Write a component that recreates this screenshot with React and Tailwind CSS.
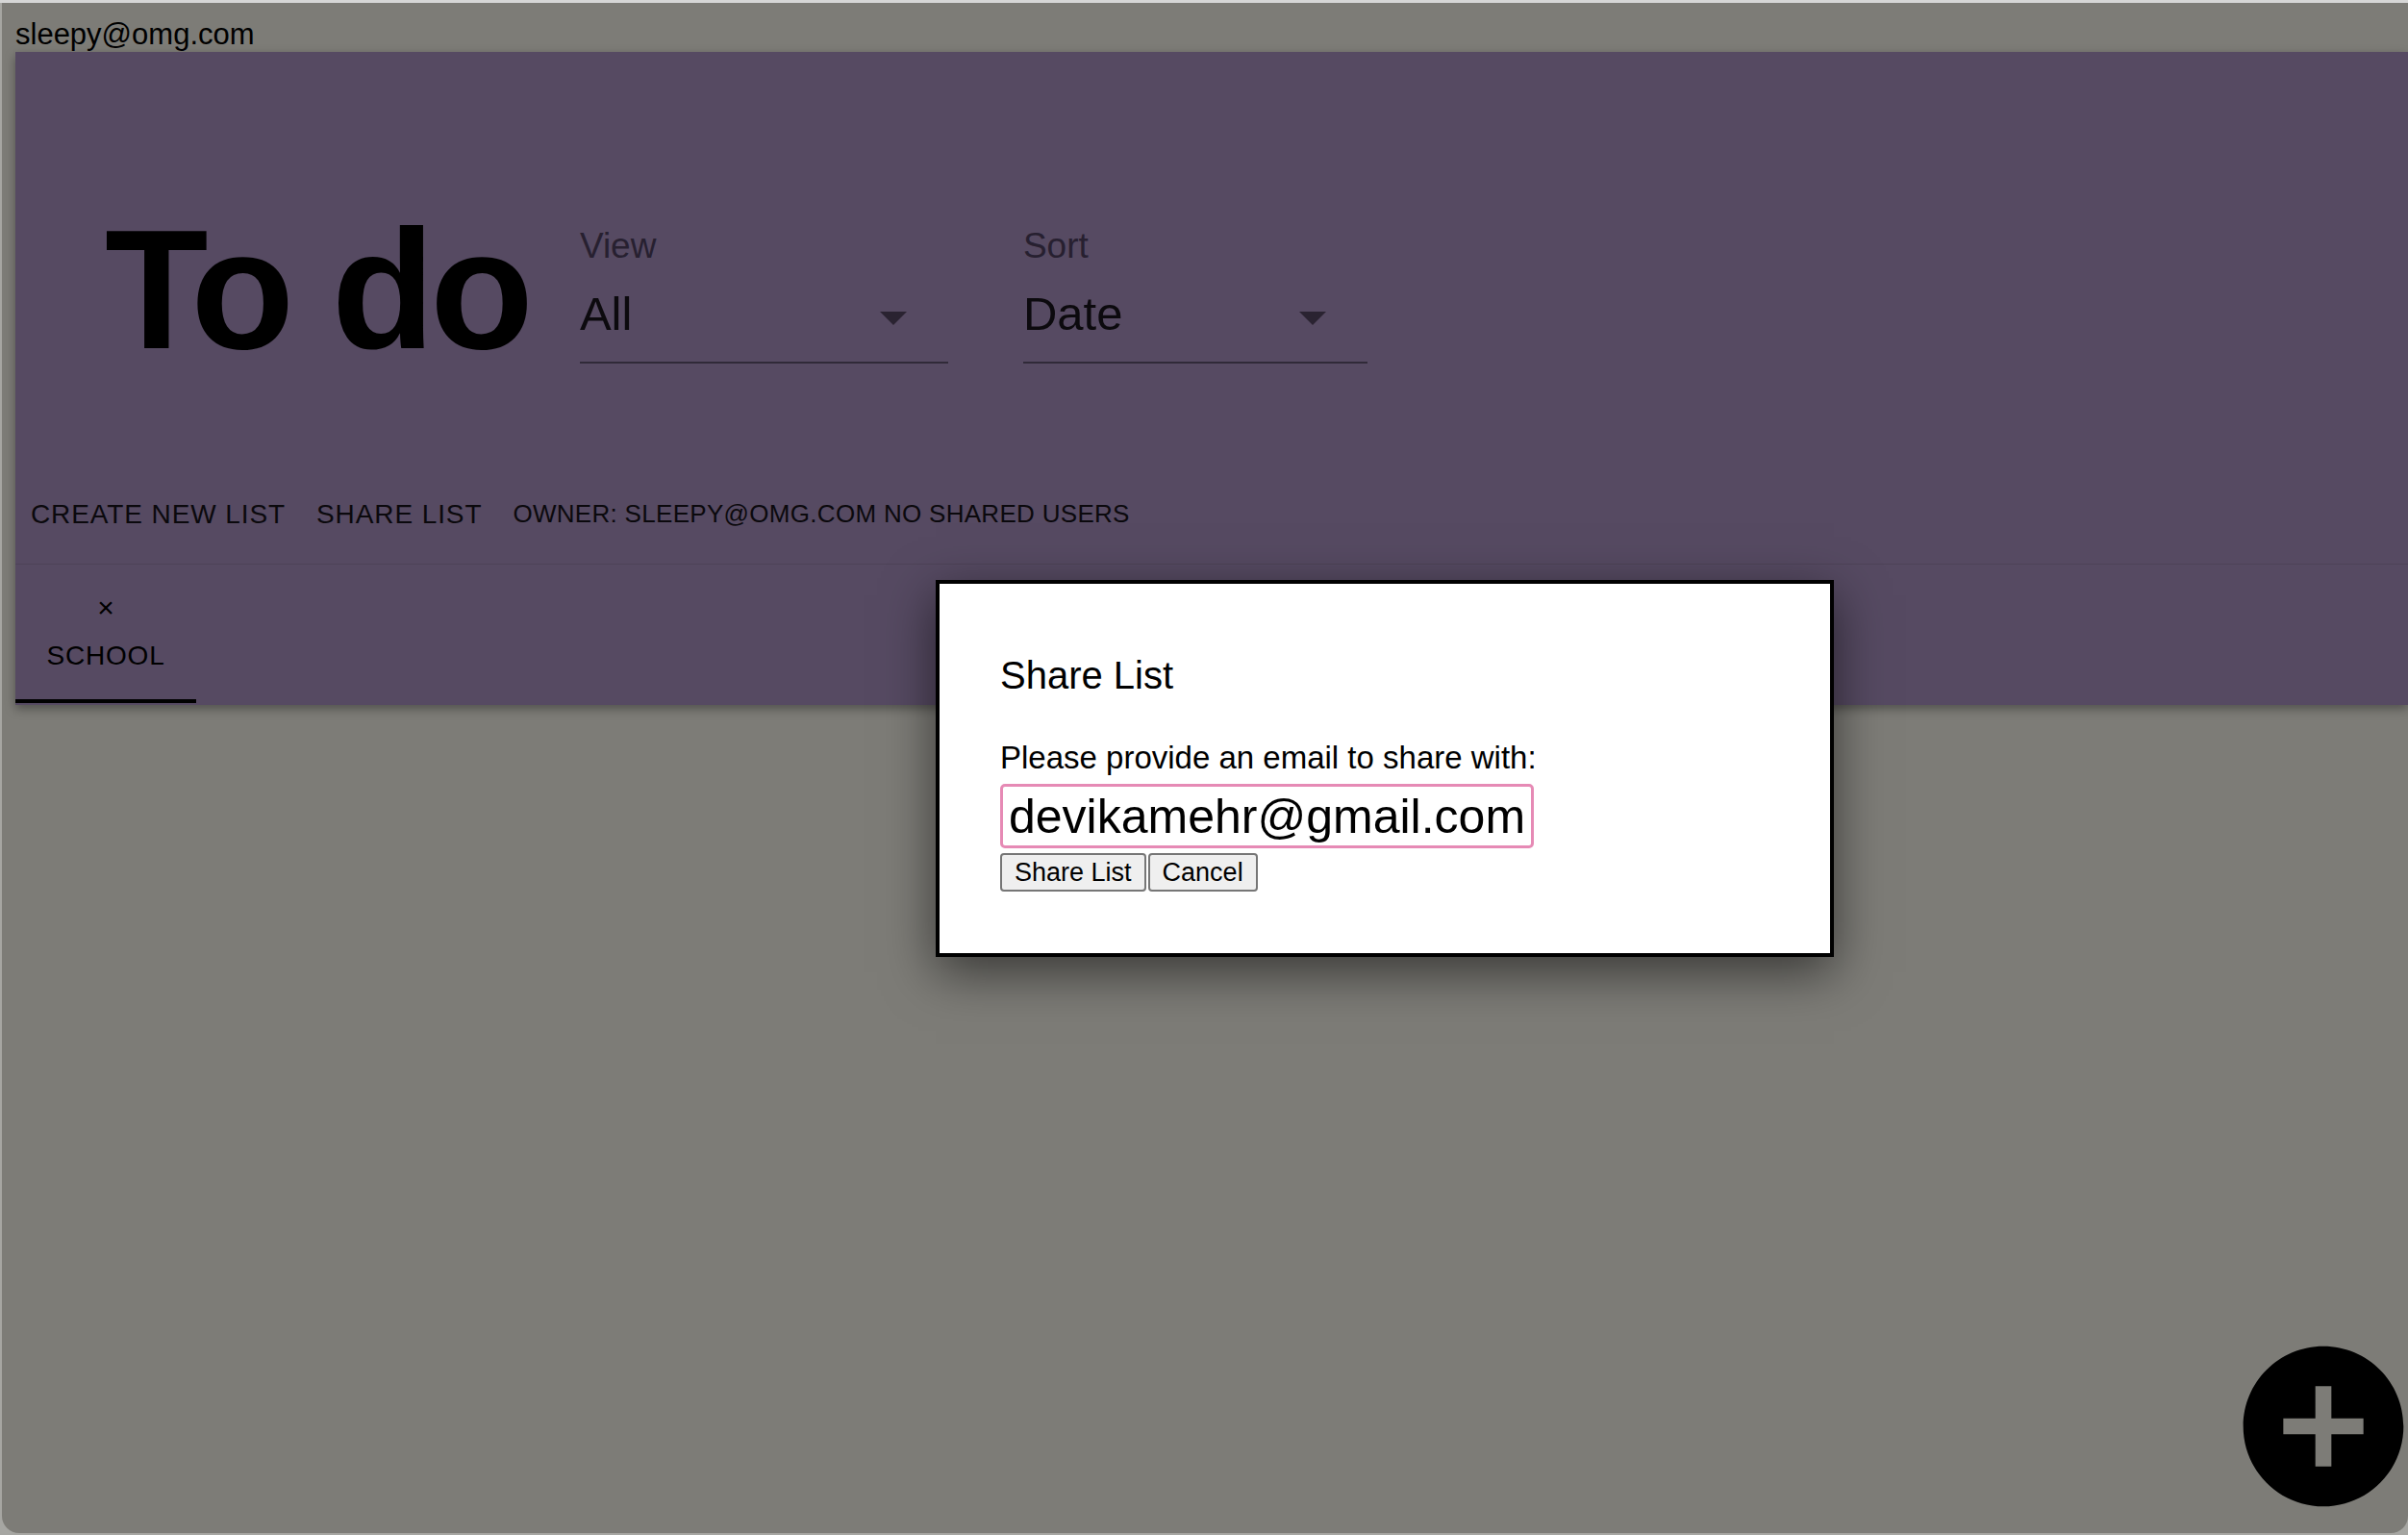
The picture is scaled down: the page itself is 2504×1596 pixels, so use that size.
import React from "react";

function SelectField({ label, value, width }) {
  return (
    <div className={`flex flex-col mt-[25px] ${width}`}>
      <div className="text-[37px] leading-[36px] text-[#272030]">{label}</div>
      <div className="relative mt-[27px] pb-[25px] border-b-2 border-[#302a38]">
        <div className="text-[49px] leading-[50px] text-[#0c0a0e]">{value}</div>
        <svg
          className="absolute right-[43px] top-[23px]"
          width="28"
          height="14"
          viewBox="0 0 28 14"
        >
          <path d="M0 0 L28 0 L14 14 Z" fill="#2a2331" />
        </svg>
      </div>
    </div>
  );
}

export default function App() {
  return (
    <div className="relative w-[2504px] h-[1596px] overflow-hidden bg-[#a6a6a2] font-['Liberation_Sans',Arial,sans-serif] text-black">
      <div className="h-[3px] bg-[#d6d6d6]" />
      <div className="ml-[2px] h-[1591px] bg-[#7d7c77] rounded-bl-[18px] rounded-br-[18px] overflow-hidden">
        <div className="h-[51px] pl-[14px] pt-[18px] text-[31px] leading-[30px]">sleepy@omg.com</div>
        <div className="ml-[14px] bg-[#564a62] shadow-[0_4px_10px_rgba(0,0,0,0.35)]">
          <div className="pt-[159px] pb-[17px]">
            <div className="flex items-start h-[176px]">
              <div className="ml-[93px] text-[176px] leading-[176px] font-bold tracking-[-5px]">To do</div>
              <div className="ml-[53px]">
                <SelectField label="View" value="All" width="w-[383px]" />
              </div>
              <div className="ml-[78px]">
                <SelectField label="Sort" value="Date" width="w-[358px]" />
              </div>
            </div>
            <div className="flex items-center mt-[111px] h-[69px] text-[#0b090d]">
              <div className="px-[16px] py-[12px] text-[28px] leading-[45px] tracking-[0.9px] uppercase">Create New List</div>
              <div className="px-[16px] py-[12px] text-[28px] leading-[45px] tracking-[0.9px] uppercase">Share List</div>
              <div className="ml-[16px] text-[26px] leading-[45px] tracking-[0.3px] uppercase">Owner: sleepy@omg.com No shared users</div>
            </div>
          </div>
          <div className="h-[147px] border-t border-[#4e4358]">
            <div className="w-[188px] h-[144px] flex flex-col items-center border-b-4 border-black">
              <div className="pt-[30px] text-[30px] leading-[30px]">×</div>
              <div className="mt-[20px] text-[28px] leading-[30px] tracking-[0.8px]">SCHOOL</div>
            </div>
          </div>
        </div>
      </div>

      <div className="absolute left-[973px] top-[603px] w-[934px] h-[392px] bg-white border-4 border-black shadow-[0_16px_50px_rgba(0,0,0,0.55)]">
        <div className="pl-[63px] pt-[72px]">
          <div className="text-[40px] leading-[46px]">Share List</div>
          <div className="mt-[44px] text-[33px] leading-[37px]">Please provide an email to share with:</div>
          <div className="mt-[9px] w-[555px] h-[67px] border-[3px] border-[#e68ab5] rounded-[5px] pl-[6px] flex items-center">
            <span className="text-[50px] leading-[56px]">devikamehr@gmail.com</span>
          </div>
          <div className="mt-[5px] flex gap-[2px]">
            <button className="h-[40px] px-[13px] bg-[#efefef] border-2 border-[#767676] rounded-[4px] text-[27px] leading-[34px] font-['Liberation_Sans',Arial,sans-serif]">Share List</button>
            <button className="h-[40px] px-[13px] bg-[#efefef] border-2 border-[#767676] rounded-[4px] text-[27px] leading-[34px] font-['Liberation_Sans',Arial,sans-serif]">Cancel</button>
          </div>
        </div>
      </div>

      <svg
        className="absolute left-[2316px] top-[1383px]"
        width="200"
        height="200"
        viewBox="0 0 24 24"
      >
        <path
          d="M12 2C6.48 2 2 6.48 2 12s4.48 10 10 10 10-4.48 10-10S17.52 2 12 2zm5 11h-4v4h-2v-4H7v-2h4V7h2v4h4v2z"
          fill="#000"
        />
      </svg>
    </div>
  );
}
